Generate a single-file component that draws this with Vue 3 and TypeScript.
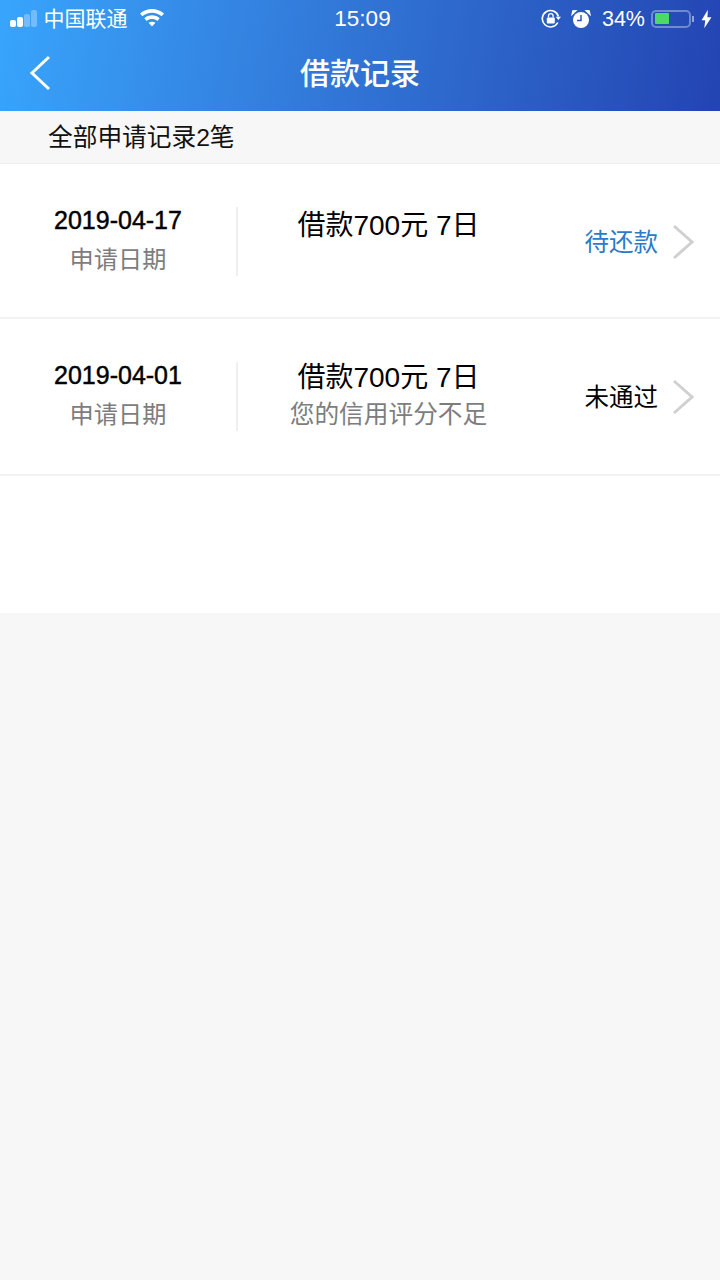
<template>
  <div class="page">
    <header class="top">
      <div class="status">
        <div class="status-left">
          <span class="signal">
            <i class="on h1"></i><i class="on h2"></i><i class="h3"></i><i class="h4"></i>
          </span>
          <span class="carrier">中国联通</span>
          <svg class="wifi" width="26" height="20" viewBox="0 0 26 20">
            <path d="M1 6.600C7.800.6 18.200.6 25 6.600l-2.400 2.700C17.200 4.600 8.800 4.600 3.400 9.300Z" fill="#fff" />
            <path d="M5.300 11.200c4.500-3.800 10.900-3.800 15.400 0l-2.400 2.700c-3.100-2.500-7.500-2.500-10.600 0Z" fill="#fff" />
            <path d="M9.500 15.800c2.100-1.500 4.900-1.500 7 0L13 19.600Z" fill="#fff" />
          </svg>
        </div>
        <div class="clock">15:09</div>
        <div class="status-right">
          <svg class="lock" width="20" height="20" viewBox="0 0 20 20" fill="none">
            <path d="M16.800 13.500A8.200 8.200 0 1 1 17.400 7.500" stroke="#fff" stroke-width="1.600" />
            <path d="M14.800 7.800h5.200l-2.600 3.200Z" fill="#fff" />
            <rect x="5.800" y="8.500" width="8" height="6" rx="1" fill="#fff" />
            <path d="M7.500 8.500V7a2.300 2.300 0 0 1 4.600 0v1.500" stroke="#fff" stroke-width="1.300" />
          </svg>
          <svg class="alarm" width="20" height="20" viewBox="0 0 20 20">
            <circle cx="10" cy="11" r="8" fill="#fff" />
            <path d="M1 5.500 5 1.600 1.800 1.800ZM19 5.500 15 1.600l3.200.2Z" fill="#fff" stroke="#fff" stroke-width="1.200" />
            <path d="M10 6v5.500H6" fill="none" stroke="#2a58bd" stroke-width="1.500" />
          </svg>
          <span class="percent">34%</span>
          <span class="battery"><i class="level"></i></span>
          <i class="nub"></i>
          <svg class="bolt" width="11" height="20" viewBox="0 0 12 20">
            <path d="M7.500 0 .6 11.300h4L3.600 20l7.800-12H7Z" fill="#fff" />
          </svg>
        </div>
      </div>
      <div class="nav">
        <svg class="back" width="24" height="36" viewBox="0 0 24 36" fill="none">
          <path d="M21 2 4 18l17 16" stroke="#fff" stroke-width="3" />
        </svg>
        <h1 class="title">借款记录</h1>
      </div>
    </header>

    <div class="summary">全部申请记录2笔</div>

    <section class="list">
      <div v-for="item in records" :key="item.date" class="row">
        <div class="date-col">
          <div class="date">{{ item.date }}</div>
          <div class="date-label">申请日期</div>
        </div>
        <div class="info-col" :class="{ single: !item.reason }">
          <div class="amount">借款700元 7日</div>
          <div class="reason">{{ item.reason }}</div>
        </div>
        <div class="state" :class="{ pending: item.pending }">{{ item.state }}</div>
        <svg class="arrow" width="22" height="36" viewBox="0 0 22 36" fill="none">
          <path d="M2 2l18 16L2 34" stroke="#d0d0d0" stroke-width="3" />
        </svg>
      </div>
    </section>
  </div>
</template>

<script setup lang="ts">
interface LoanRecord {
  date: string
  reason: string
  state: string
  pending: boolean
}

const records: LoanRecord[] = [
  { date: '2019-04-17', reason: '', state: '待还款', pending: true },
  { date: '2019-04-01', reason: '您的信用评分不足', state: '未通过', pending: false },
]
</script>

<style>
html,
body {
  background: #f7f7f7;
}
</style>

<style scoped>
.page {
  min-height: 1280px;
  background: #f7f7f7;
  font-family: 'Liberation Sans', 'Noto Sans CJK SC', sans-serif;
  color: #000;
}

.top {
  height: 111px;
  background: linear-gradient(100deg, #38a5fc 0%, #3484e2 33%, #2d65ca 66%, #2344b2 100%);
  color: #fff;
}

.status {
  height: 37px;
  display: grid;
  grid-template-columns: 1fr auto 1fr;
  align-items: center;
  padding: 0 8px 0 10px;
}

.status-left,
.status-right {
  display: flex;
  align-items: center;
}

.status-right {
  justify-content: flex-end;
}

.signal {
  display: flex;
  align-items: flex-end;
  gap: 1.500px;
  height: 17px;
  margin-right: 7px;
}

.signal i {
  width: 5.500px;
  border-radius: 2px;
  background: rgba(255, 255, 255, 0.3);
}

.signal .on {
  background: #fff;
}

.h1 { height: 7px; }
.h2 { height: 10px; }
.h3 { height: 13px; }
.h4 { height: 17px; }

.carrier {
  font-size: 21px;
  margin-top: -4px;
}

.wifi {
  margin-left: 11px;
  margin-top: -3px;
}

.clock {
  font-size: 22.500px;
  margin-left: 3px;
}

.alarm {
  margin-left: 10px;
}

.percent {
  font-size: 21.500px;
  margin-left: 11px;
  margin-top: 2px;
}

.battery {
  width: 40px;
  height: 18px;
  margin-left: 6px;
  padding: 1.500px;
  box-sizing: border-box;
  border: 2px solid rgba(255, 255, 255, 0.35);
  border-radius: 5px;
}

.level {
  display: block;
  width: 14px;
  height: 100%;
  border-radius: 1px;
  background: #4cd964;
}

.nub {
  width: 2px;
  height: 6px;
  margin-left: 1px;
  background: rgba(255, 255, 255, 0.5);
}

.bolt {
  margin-left: 7px;
}

.nav {
  height: 74px;
  margin-top: -3px;
  display: flex;
  align-items: center;
  justify-content: center;
  position: relative;
}

.back {
  position: absolute;
  left: 28px;
  top: 21px;
}

.title {
  margin: 0;
  font-size: 30px;
  font-weight: 500;
}

.summary {
  height: 53px;
  line-height: 54px;
  padding-left: 48px;
  font-size: 24.700px;
  color: #111;
  box-sizing: border-box;
  border-bottom: 1px solid #eeeeee;
}

.list {
  height: 449px;
  background: #fff;
}

.row {
  height: 155px;
  box-sizing: border-box;
  display: flex;
  align-items: center;
  border-bottom: 2px solid #f2f2f2;
}

.row:last-child {
  height: 157px;
  padding-bottom: 2px;
}

.date-col {
  width: 238px;
  height: 69px;
  box-sizing: border-box;
  border-right: 2px solid #efefef;
  text-align: center;
  margin-top: 1px;
}

.date {
  font-size: 25px;
  -webkit-text-stroke: 0.450px #000;
  line-height: 26px;
}

.date-label {
  font-size: 24.200px;
  line-height: 54px;
  color: #7d7d7d;
}

.info-col {
  width: 301px;
  height: 72px;
  text-align: center;
  margin-top: 1px;
}

.info-col.single {
  margin-top: 7px;
}

.amount {
  font-size: 28px;
  line-height: 36px;
}

.reason {
  font-size: 24.700px;
  line-height: 38px;
  color: #7d7d7d;
}

.state {
  width: 119px;
  text-align: right;
  font-size: 24.500px;
  margin-top: -1px;
}

.pending {
  color: #2a7bca;
}

.arrow {
  margin-left: 14px;
  margin-top: 2px;
}
</style>
